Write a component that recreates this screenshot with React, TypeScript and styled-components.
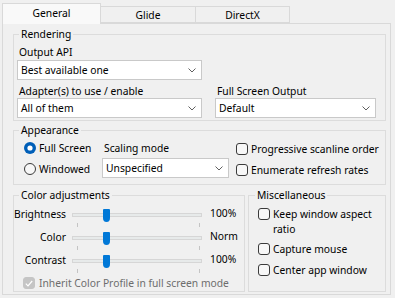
import styled, { createGlobalStyle } from "styled-components";

const Global = createGlobalStyle`
  html, body {
    margin: 0;
    padding: 0;
    background: #f0f0f0;
  }
  body {
    font-family: "Noto Sans", "Liberation Sans", sans-serif;
    font-size: 10.3px;
    color: #000;
  }
`;

const Window = styled.div`
  width: 395px;
  height: 298px;
  box-sizing: border-box;
  padding: 3px 0 0 2px;
  overflow: hidden;
`;

const TabStrip = styled.div`
  display: flex;
  align-items: flex-end;
  height: 20px;
  position: relative;
  z-index: 1;
`;

const Tab = styled.div<{ $active?: boolean; $w: number }>`
  box-sizing: border-box;
  width: ${(p) => p.$w}px;
  height: ${(p) => (p.$active ? 21 : 17)}px;
  margin-bottom: ${(p) => (p.$active ? -1 : 0)}px;
  margin-left: -1px;
  &:first-child {
    margin-left: 0;
  }
  border: 1px solid #d9d9d9;
  border-bottom: ${(p) => (p.$active ? "none" : "1px solid #d9d9d9")};
  background: ${(p) => (p.$active ? "#f9f9f9" : "#f0f0f0")};
  display: flex;
  align-items: center;
  justify-content: center;
  padding-bottom: ${(p) => (p.$active ? 2 : 0)}px;
  z-index: ${(p) => (p.$active ? 1 : 0)};
`;

const Panel = styled.div`
  box-sizing: border-box;
  width: 389px;
  height: 272px;
  border: 1px solid #d9d9d9;
  background: #f0f0f0;
  padding: 0 4px 0 10px;
  display: flex;
  flex-direction: column;
`;

const GroupBox = styled.div<{ $mt: number }>`
  position: relative;
  border: 1px solid #dcdcdc;
  margin-top: ${(p) => p.$mt}px;
`;

const Caption = styled.span<{ $left?: number }>`
  position: absolute;
  top: -8px;
  left: ${(p) => p.$left ?? 5}px;
  padding: 0 2px;
  line-height: 14px;
  background: #f0f0f0;
`;

const RenderGrid = styled.div`
  display: grid;
  grid-template-columns: 185px 161px;
  column-gap: 13px;
  padding: 10px 0 2px 3px;
`;

const FieldLabel = styled.div<{ $mt?: number }>`
  line-height: 14px;
  padding-left: 2px;
  margin-top: ${(p) => p.$mt ?? 0}px;
  white-space: nowrap;
`;

const Select = styled.div<{ $mt?: number }>`
  box-sizing: border-box;
  height: 20px;
  margin-top: ${(p) => p.$mt ?? 0}px;
  background: #fff;
  border: 1px solid #c9c9c9;
  display: flex;
  align-items: center;
  justify-content: space-between;
  padding: 0 5px 0 3px;
  white-space: nowrap;
`;

const Chevron = () => (
  <svg width="8" height="5" viewBox="0 0 8 5">
    <polyline points="0.5,0.5 4,4 7.5,0.5" fill="none" stroke="#606060" strokeWidth="1" />
  </svg>
);

const AppearanceRow = styled.div`
  display: flex;
  align-items: flex-start;
  padding: 8px 0 5px 10px;
`;

const RadioCol = styled.div`
  width: 78px;
  display: flex;
  flex-direction: column;
  gap: 3px;
`;

const OptionRow = styled.div<{ $disabled?: boolean }>`
  display: flex;
  align-items: center;
  height: 18px;
  gap: 3px;
  white-space: nowrap;
  color: ${(p) => (p.$disabled ? "#6d6d6d" : "#000")};
`;

const Radio = ({ checked }: { checked?: boolean }) => (
  <svg width="12" height="12" viewBox="0 0 12 12">
    {checked ? (
      <>
        <circle cx="6" cy="6" r="6" fill="#005fb8" />
        <circle cx="6" cy="6" r="2.6" fill="#fff" />
      </>
    ) : (
      <circle cx="6" cy="6" r="5.5" fill="#f7f7f7" stroke="#3a3a3a" strokeWidth="1" />
    )}
  </svg>
);

const Box = styled.span<{ $disabled?: boolean }>`
  box-sizing: border-box;
  width: 12px;
  height: 12px;
  flex: none;
  border-radius: 3px;
  border: 1px solid ${(p) => (p.$disabled ? "#c5c5c5" : "#3a3a3a")};
  background: ${(p) => (p.$disabled ? "#c5c5c5" : "#f7f7f7")};
  display: flex;
  align-items: center;
  justify-content: center;
`;

const ScalingCol = styled.div`
  width: 127px;
  margin-top: 2px;
  display: flex;
  flex-direction: column;
`;

const CheckCol = styled.div`
  margin-left: 7px;
  margin-top: 1px;
  display: flex;
  flex-direction: column;
  gap: 3px;
`;

const BottomRow = styled.div`
  display: flex;
  gap: 3px;
  margin-top: 10px;
`;

const ColorBox = styled(GroupBox)`
  width: 232px;
  height: 97px;
  box-sizing: border-box;
  padding-top: 9px;
`;

const MiscBox = styled(GroupBox)`
  width: 138px;
  height: 97px;
  box-sizing: border-box;
  padding: 11px 0 0 9px;
`;

const SliderRow = styled.div`
  display: grid;
  grid-template-columns: 52px 130px auto;
  column-gap: 6px;
  height: 23px;
`;

const SliderLabel = styled.div`
  text-align: right;
  line-height: 18px;
`;

const SliderValue = styled.div`
  line-height: 17px;
  margin-left: 2px;
`;

const SliderBody = styled.div`
  position: relative;
  height: 23px;
`;

const Track = styled.div`
  position: absolute;
  left: 0;
  right: 0;
  top: 8px;
  height: 4px;
  box-sizing: border-box;
  background: #e7eaea;
  border: 1px solid #d6d6d6;
`;

const Tick = styled.div<{ $x: number }>`
  position: absolute;
  left: ${(p) => p.$x}px;
  top: 18px;
  width: 1px;
  height: 4px;
  background: #c4c4c4;
`;

const Thumb = styled.svg`
  position: absolute;
  left: 31px;
  top: 4px;
`;

const Slider = () => (
  <SliderBody>
    <Track />
    <Tick $x={5} />
    <Tick $x={127} />
    <Thumb width="7" height="13" viewBox="0 0 7 13">
      <path d="M1 0 H6 A1 1 0 0 1 7 1 V9 Q7 13 3.5 13 Q0 13 0 9 V1 A1 1 0 0 1 1 0 Z" fill="#0078d7" />
    </Thumb>
  </SliderBody>
);

const InheritRow = styled(OptionRow)`
  height: 16px;
  margin: 1px 0 0 9px;
  gap: 4px;
`;

const MiscRow = styled.div<{ $mt: number }>`
  display: flex;
  align-items: flex-start;
  gap: 3px;
  line-height: 15px;
  margin-top: ${(p) => p.$mt}px;
  white-space: nowrap;
  & > span:first-child {
    margin-top: 1px;
  }
`;

const sliders = [
  { label: "Brightness", value: "100%" },
  { label: "Color", value: "Norm" },
  { label: "Contrast", value: "100%" },
];

export default function App() {
  return (
    <>
      <Global />
      <Window>
        <TabStrip>
          <Tab $active $w={99}>General</Tab>
          <Tab $w={96}>Glide</Tab>
          <Tab $w={95}>DirectX</Tab>
        </TabStrip>
        <Panel>
          <GroupBox $mt={10}>
            <Caption>Rendering</Caption>
            <RenderGrid>
              <div>
                <FieldLabel>Output API</FieldLabel>
                <Select $mt={1}>
                  Best available one
                  <Chevron />
                </Select>
              </div>
              <div />
              <div>
                <FieldLabel $mt={4}>Adapter(s) to use / enable</FieldLabel>
                <Select>
                  All of them
                  <Chevron />
                </Select>
              </div>
              <div>
                <FieldLabel $mt={4}>Full Screen Output</FieldLabel>
                <Select>
                  Default
                  <Chevron />
                </Select>
              </div>
            </RenderGrid>
          </GroupBox>

          <GroupBox $mt={9}>
            <Caption>Appearance</Caption>
            <AppearanceRow>
              <RadioCol>
                <OptionRow>
                  <Radio checked />
                  Full Screen
                </OptionRow>
                <OptionRow>
                  <Radio />
                  Windowed
                </OptionRow>
              </RadioCol>
              <ScalingCol>
                <FieldLabel>Scaling mode</FieldLabel>
                <Select $mt={3}>
                  Unspecified
                  <Chevron />
                </Select>
              </ScalingCol>
              <CheckCol>
                <OptionRow>
                  <Box />
                  Progressive scanline order
                </OptionRow>
                <OptionRow>
                  <Box />
                  Enumerate refresh rates
                </OptionRow>
              </CheckCol>
            </AppearanceRow>
          </GroupBox>

          <BottomRow>
            <ColorBox $mt={0}>
              <Caption>Color adjustments</Caption>
              {sliders.map((s) => (
                <SliderRow key={s.label}>
                  <SliderLabel>{s.label}</SliderLabel>
                  <Slider />
                  <SliderValue>{s.value}</SliderValue>
                </SliderRow>
              ))}
              <InheritRow $disabled>
                <Box $disabled>
                  <svg width="8" height="7" viewBox="0 0 8 7">
                    <polyline points="0.8,3.6 3,5.8 7.2,1" fill="none" stroke="#fff" strokeWidth="1.2" />
                  </svg>
                </Box>
                Inherit Color Profile in full screen mode
              </InheritRow>
            </ColorBox>
            <MiscBox $mt={0}>
              <Caption $left={6}>Miscellaneous</Caption>
              <MiscRow $mt={0}>
                <Box />
                <span>
                  Keep window aspect
                  <br />
                  ratio
                </span>
              </MiscRow>
              <MiscRow $mt={5}>
                <Box />
                <span>Capture mouse</span>
              </MiscRow>
              <MiscRow $mt={6}>
                <Box />
                <span>Center app window</span>
              </MiscRow>
            </MiscBox>
          </BottomRow>
        </Panel>
      </Window>
    </>
  );
}
